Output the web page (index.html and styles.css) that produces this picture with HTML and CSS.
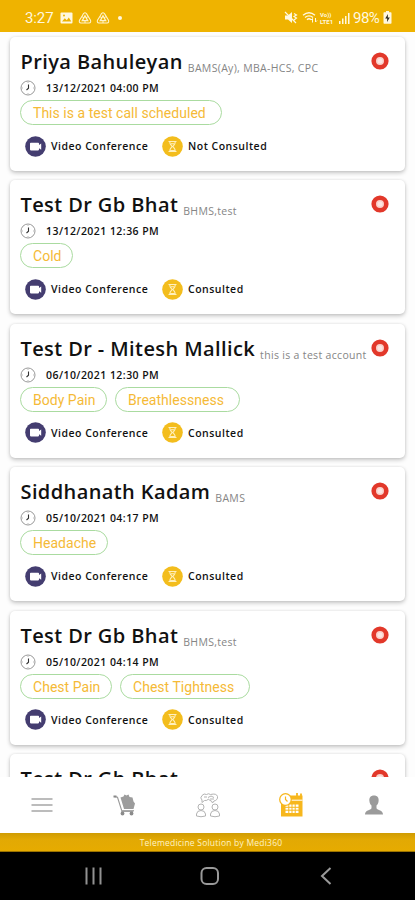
FILE: index.html
```
<!DOCTYPE html>
<html lang="en">
<head>
<meta charset="utf-8">
<title>Consultations</title>
<link rel="stylesheet" href="styles.css">
</head>
<body>
<svg class="defs" width="0" height="0" aria-hidden="true">
  <symbol id="clock" viewBox="0 0 16 16"><circle cx="8" cy="8" r="7" fill="#fff" stroke="#999" stroke-width="1"/><path d="M8.500 4.500v3.700L6.500 10" fill="none" stroke="#333" stroke-width="1.100"/><path d="M8 2v1M8 13v1M2 8h1M13 8h1" stroke="#bbb"/></symbol>
  <symbol id="video" viewBox="0 0 21 21"><circle cx="10.500" cy="10.500" r="10.300" fill="#443d70"/><path d="M5 7.500q0-.8.8-.8h7.400q.8 0 .8.800v1.400l2.200-1.400v6.200L14 12.300v1.300q0 .8-.8.800H5.800q-.8 0-.8-.8z" fill="#fff"/></symbol>
  <symbol id="glass" viewBox="0 0 21 21"><circle cx="10.500" cy="10.500" r="10.300" fill="#f3bd1d"/><path d="M6.500 5.500h8M6.500 15.500h8M7.700 5.500c0 3 1.500 3.600 2.500 5-1 1.400-2.500 2-2.500 5M13.300 5.500c0 3-1.500 3.600-2.500 5 1 1.400 2.500 2 2.500 5M8.500 14.500h4M9 7.800h3" fill="none" stroke="#fff0bd" stroke-width="1.100"/></symbol>
  <symbol id="ring" viewBox="0 0 18 18"><circle cx="9" cy="9" r="6.300" fill="#fbd0c9" stroke="#e2382a" stroke-width="4.600"/><circle cx="9" cy="9" r="2.500" fill="#fff" opacity=".45"/></symbol>
  <symbol id="recycle" viewBox="0 0 14 14"><path d="M4.300 4.800L5.500 2.600q1.500-1.600 3 0l4 6.600q.8 2.500-1.500 2.800H3q-2.300-.3-1.500-2.800z" fill="none" stroke="#fff3cb" stroke-width="1.100"/><path d="M7 4.800l2.700 4.900H4.300z" fill="none" stroke="#fff3cb" stroke-width="1.300"/><path d="M3.800 5.500L6 7M10.200 5.500L8 7M7 9.500V12" stroke="#fff3cb"/></symbol>
</svg>
<div class="phone">
  <header class="status">
    <span class="time">3:27</span>
    <svg class="st-pic" viewBox="0 0 13 12"><rect x=".5" y=".5" width="12" height="11" rx="1" fill="#fff8df"/><path d="M2 9.500l2.800-3.300 2 2 2-2.600L11.300 9.500z" fill="#edb200"/><circle cx="4" cy="3.500" r="1" fill="#edb200"/></svg>
    <svg class="st-rec"><use href="#recycle"/></svg>
    <svg class="st-rec"><use href="#recycle"/></svg>
    <i class="dot"></i>
    <span class="spacer"></span>
    <svg class="st-mute" viewBox="0 0 14 13"><path d="M1 4.500h3L8 1v11L4 8.500H1z" fill="#fff8df"/><path d="M1 1l11 11M10 2.500l2.500 1.500L10 5.500l2.500 1.500L10 9" fill="none" stroke="#fff8df" stroke-width="1.200"/></svg>
    <svg class="st-wifi" viewBox="0 0 16 13"><path d="M1 4.200q6-5 12 0M3 6.500q4-3.300 8 0M5 8.700q2-1.700 4 0" fill="none" stroke="#fff8df" stroke-width="1.400"/><path d="M10.500 11.500V7.500l-1.500 1.500M13.500 7v4l1.500-1.500" fill="none" stroke="#fff8df"/></svg>
    <span class="volte"><b>Vo))</b><b>LTE1</b></span>
    <svg class="st-sig" viewBox="0 0 12 12"><path d="M1 9h1.500v3H1zM4 6.500h1.500V12H4zM7 4h1.500v8H7zM10 1h1.500v11H10z" fill="#fff8df"/></svg>
    <span class="pct">98%</span>
    <svg class="st-bat" viewBox="0 0 9 13"><path d="M3 0h3v1.300h1.800q.7 0 .7.700v10q0 .7-.7.700H1.200q-.7 0-.7-.7V2q0-.7.7-.7H3z" fill="#fff8df"/><path d="M5 3L2.200 7.500h2L4 11l2.800-4.500h-2z" fill="#2d2a20"/></svg>
  </header>

  <main class="list">
    <article class="card">
      <div class="head"><h2>Priya Bahuleyan</h2><span>BAMS(Ay), MBA-HCS, CPC</span><svg class="ring"><use href="#ring"/></svg></div>
      <div class="when"><svg><use href="#clock"/></svg><time>13/12/2021 04:00 PM</time></div>
      <div class="chips"><span class="chip w-call">This is a test call scheduled</span></div>
      <div class="meta"><svg><use href="#video"/></svg><b class="mode">Video Conference</b><svg><use href="#glass"/></svg><b>Not Consulted</b></div>
    </article>
    <article class="card">
      <div class="head"><h2>Test Dr Gb Bhat</h2><span>BHMS,test</span><svg class="ring"><use href="#ring"/></svg></div>
      <div class="when"><svg><use href="#clock"/></svg><time>13/12/2021 12:36 PM</time></div>
      <div class="chips"><span class="chip w-cold">Cold</span></div>
      <div class="meta"><svg><use href="#video"/></svg><b class="mode">Video Conference</b><svg><use href="#glass"/></svg><b>Consulted</b></div>
    </article>
    <article class="card">
      <div class="head"><h2>Test Dr - Mitesh Mallick</h2><span>this is a test account</span><svg class="ring"><use href="#ring"/></svg></div>
      <div class="when"><svg><use href="#clock"/></svg><time>06/10/2021 12:30 PM</time></div>
      <div class="chips"><span class="chip w-body">Body Pain</span><span class="chip w-breath">Breathlessness</span></div>
      <div class="meta"><svg><use href="#video"/></svg><b class="mode">Video Conference</b><svg><use href="#glass"/></svg><b>Consulted</b></div>
    </article>
    <article class="card">
      <div class="head"><h2>Siddhanath Kadam</h2><span>BAMS</span><svg class="ring"><use href="#ring"/></svg></div>
      <div class="when"><svg><use href="#clock"/></svg><time>05/10/2021 04:17 PM</time></div>
      <div class="chips"><span class="chip w-head">Headache</span></div>
      <div class="meta"><svg><use href="#video"/></svg><b class="mode">Video Conference</b><svg><use href="#glass"/></svg><b>Consulted</b></div>
    </article>
    <article class="card">
      <div class="head"><h2>Test Dr Gb Bhat</h2><span>BHMS,test</span><svg class="ring"><use href="#ring"/></svg></div>
      <div class="when"><svg><use href="#clock"/></svg><time>05/10/2021 04:14 PM</time></div>
      <div class="chips"><span class="chip w-chest">Chest Pain</span><span class="chip w-tight">Chest Tightness</span></div>
      <div class="meta"><svg><use href="#video"/></svg><b class="mode">Video Conference</b><svg><use href="#glass"/></svg><b>Consulted</b></div>
    </article>
    <article class="card">
      <div class="head"><h2>Test Dr Gb Bhat</h2><svg class="ring"><use href="#ring"/></svg></div>
    </article>
  </main>

  <nav class="tabs">
    <svg viewBox="0 0 28 28"><path d="M3.500 8h21M3.500 14h21M3.500 20h21" stroke="#a6a6a6" stroke-width="1.700"/></svg>
    <svg viewBox="0 0 28 28"><path d="M3 5.500l3.500.8 4.500 14.200h11" fill="none" stroke="#999" stroke-width="1.100"/><path d="M2.500 4.500h3v2h-3z" fill="#888"/><path d="M9.500 6.500l3-1 1-2 2 1 2-1 1 2.500 3 .5 1 4 1.500 2-1.500 5.500H13z" fill="#9c9c9c"/><path d="M10 19h13v1.500H10z" fill="#aaa"/><circle cx="11.500" cy="22.500" r="1.900" fill="#8b8b8b"/><circle cx="20.500" cy="22.500" r="1.900" fill="#8b8b8b"/></svg>
    <svg viewBox="0 0 28 28"><g fill="#fff" stroke="#b3b3b3" stroke-width="1"><path d="M8 4.500q2-2.500 4.500-1 2-1.500 4 0 6-1.500 7 2 .5 3.500-3.500 4.500l-1.500 2-1-2q-2.500-.5-3-2-1.500 2-4 1.500L8 11.500V9Q5.500 7 8 4.500z"/><path d="M14 6.500q3-3 6 0M16 8h4M10 6h3"/><circle cx="7" cy="16" r="3"/><circle cx="21" cy="16" r="3"/><path d="M2.500 25v-2q.5-3.500 4.500-3.500t4.500 3.500v2q-4.500 1.500-9 0zM16.500 25v-2q.5-3.500 4.500-3.500t4.500 3.500v2q-4.500 1.500-9 0z"/></g></svg>
    <svg viewBox="0 0 28 28"><path d="M4 4.500h21.500V25.500H4z" fill="#f7b71d"/><path d="M14 9.200h11.500" stroke="#fff" stroke-width="1"/><path d="M20 2v4M24 2.500v4" stroke="#f7b71d" stroke-width="1.800"/><path d="M8.500 13.500h13v8.500h-13z" fill="#fff"/><path d="M8 16.300h14M8 19.200h14M11.800 13v9M15 13v9M18.200 13v9" stroke="#f7b71d" stroke-width="1"/><circle cx="8.500" cy="8.500" r="5.800" fill="#fff" stroke="#f7b71d" stroke-width="1.300"/><path d="M8.500 5.500v3l2 2" fill="none" stroke="#f7b71d" stroke-width="1.200"/></svg>
    <svg viewBox="0 0 28 28"><path d="M14 4.500c3.300 0 5 2.200 4.600 5.400-.2 2.100-1 3.600-2.100 4.700v2.600c1 2 6.500 1.800 6.500 6.300H5c0-4.500 5.500-4.300 6.500-6.300v-2.600c-1.100-1.100-1.900-2.600-2.100-4.700C9 6.700 10.700 4.500 14 4.500z" fill="#9b9b9b"/></svg>
  </nav>
  <footer class="credit"><span>Telemedicine Solution by Medi360</span></footer>
  <div class="sysnav">
    <svg viewBox="0 0 24 24"><path d="M4.500 3.500v17M11.500 3.500v17M18.500 3.500v17" stroke="#929292" stroke-width="2"/></svg>
    <svg viewBox="0 0 24 24"><rect x="3.500" y="4" width="16.500" height="16" rx="5" fill="none" stroke="#999" stroke-width="2"/></svg>
    <svg viewBox="0 0 24 24"><path d="M16.500 4L8 12l8.500 8" fill="none" stroke="#999" stroke-width="2"/></svg>
  </div>
</div>
</body>
</html>
```
FILE: styles.css
```
* { box-sizing: border-box; }
body { margin: 0; background: #fff; font-family: "Open Sans", "Noto Sans", sans-serif; color: #111; }
svg { display: block; flex: none; }
.defs { position: absolute; }
.phone { width: 415px; height: 900px; display: flex; flex-direction: column; overflow: hidden; white-space: nowrap; }

.status { height: 32px; flex: none; background: #efb300; color: #fff8df; display: flex; align-items: center; padding: 3px 23px 0 25px; font-family: Roboto, sans-serif; font-size: 15px; }
.time { width: 35px; letter-spacing: -.1px; }
.st-pic { width: 13px; height: 12px; margin-right: 5px; }
.st-rec { width: 14px; height: 14px; margin-right: 4px; }
.dot { width: 4px; height: 4px; margin-left: 4px; border-radius: 50%; background: #fff8df; }
.spacer { flex: 1; }
.st-mute { width: 14px; height: 13px; margin-right: 4px; }
.st-wifi { width: 16px; height: 13px; margin-right: 2px; }
.volte { width: 15px; font-size: 6px; line-height: 7px; margin-right: 3px; }
.volte b { display: block; }
.st-sig { width: 12px; height: 12px; margin-right: 3px; }
.pct { width: 29px; letter-spacing: -.5px; }
.st-bat { width: 9px; height: 13px; margin-left: 1px; }

.list { height: 745px; flex: none; overflow: hidden; padding: 5px 10px 0; background: #fdfdfd; display: flex; flex-direction: column; gap: 9.400px; }
.card { height: 134px; flex: none; padding: 0 10px; background: #fff; border-radius: 5px; box-shadow: 0 2px 4px rgba(0,0,0,.22), 0 0 3px rgba(0,0,0,.08); }
.head { height: 42px; display: flex; align-items: baseline; padding: 11px 0 0 .5px; }
.head h2 { margin: 0; font-size: 20px; line-height: 28px; font-weight: 600; letter-spacing: .4px; }
.head span { margin-left: 5px; font-size: 10.500px; line-height: 14px; font-weight: 400; letter-spacing: .32px; color: #858585; transform: translateY(3px); }
.ring { width: 18px; height: 18px; margin: 4px 6px 0 auto; align-self: flex-start; }
.when { height: 18px; display: flex; align-items: center; gap: 10px; font-size: 10.500px; font-weight: 600; letter-spacing: .45px; }
.when svg { width: 16px; height: 16px; }
.chips { height: 28px; padding-top: 3px; display: flex; gap: 8px; }
.chip { height: 25px; border: 1px solid #aadba0; border-radius: 13px; padding-left: 12px; line-height: 25px; font-family: Roboto, sans-serif; font-size: 14px; letter-spacing: .03px; color: #f5ba37; }
.w-call { width: 202px; }
.w-cold { width: 53px; }
.w-body { width: 87px; }
.w-breath { width: 125px; }
.w-head { width: 88px; }
.w-chest { width: 92px; }
.w-tight { width: 130px; }
.meta { height: 42px; display: flex; align-items: center; padding-left: 5px; font-size: 10.500px; }
.meta svg { width: 21px; height: 21px; margin-right: 5px; }
.meta b { font-weight: 600; letter-spacing: .5px; }
.meta .mode { width: 111px; }

.tabs { height: 56px; flex: none; display: grid; grid-template-columns: repeat(5, 1fr); justify-items: center; align-items: center; background: #fff; }
.tabs svg { width: 28px; height: 28px; }
.credit { height: 19px; flex: none; background: linear-gradient(#cf9c03, #e2a904 35%, #e6ab00); border-bottom: 1px solid #9b7300; color: #fff3c4; text-align: center; font-size: 8.500px; line-height: 20px; letter-spacing: .22px; padding-left: 7px; }
.sysnav { height: 48px; flex: none; background: #000; display: flex; align-items: center; gap: 92px; padding-left: 82px; }
.sysnav svg { width: 24px; height: 24px; }
```
